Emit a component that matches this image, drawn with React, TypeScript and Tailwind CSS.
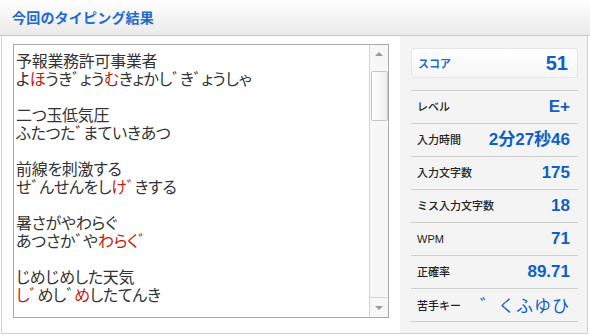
import React from "react";

type Seg = { t: string; red?: boolean };

const lines: Seg[][] = [
  [{ t: "予報業務許可事業者" }],
  [{ t: "よ" }, { t: "ほ", red: true }, { t: "うきﾞょう" }, { t: "む", red: true }, { t: "きょかしﾞきﾞょうしゃ" }],
  [],
  [{ t: "二つ玉低気圧" }],
  [{ t: "ふたつたﾞまていきあつ" }],
  [],
  [{ t: "前線を刺激する" }],
  [{ t: "せﾞんせんをし" }, { t: "けﾞ", red: true }, { t: "きする" }],
  [],
  [{ t: "暑さがやわらぐ" }],
  [{ t: "あつさかﾞや" }, { t: "わらくﾞ", red: true }],
  [],
  [{ t: "じめじめした天気" }],
  [{ t: "しﾞ", red: true }, { t: "めしﾞ" }, { t: "め", red: true }, { t: "したてんき" }],
];

const stats = [
  { label: "レベル", value: "E+" },
  { label: "入力時間", value: "2分27秒46" },
  { label: "入力文字数", value: "175" },
  { label: "ミス入力文字数", value: "18" },
  { label: "WPM", value: "71" },
  { label: "正確率", value: "89.71" },
];

export default function App() {
  return (
    <div className="w-[590px] h-[336px] bg-white overflow-hidden font-['Liberation_Sans','Noto_Sans_CJK_JP',sans-serif]">
      {/* Header */}
      <header className="h-[36px] pl-[12px] flex items-center border-b border-[#c9c9c9] bg-gradient-to-b from-white to-[#eaeaea]">
        <h1 className="text-[14px] font-bold text-[#1c6ccf] font-['Noto_Sans_CJK_JP',sans-serif] tracking-[0.2px]">
          今回のタイピング結果
        </h1>
      </header>

      <div className="ml-[1px] w-[587px] h-[298px] flex border-l border-r border-b border-[#d2d2d2]">
        {/* Typed text */}
        <div className="w-[398px] bg-white pl-[11px] pt-[8px]">
          <div className="w-[376px] h-[274px] border border-[#a9a9a9] flex bg-white">
            <div className="flex-1 pl-[2px] pt-[6px] text-[16px] leading-[18px] text-[#333] font-['Noto_Sans_CJK_JP',sans-serif] [font-feature-settings:'palt'] tracking-[-0.3px]">
              {lines.map((segs, i) => (
                <div key={i} className="h-[18px] whitespace-nowrap">
                  {segs.map((s, j) => (
                    <span key={j} className={s.red ? "text-[#c41a0a]" : ""}>
                      {s.t}
                    </span>
                  ))}
                </div>
              ))}
            </div>
            {/* Scrollbar */}
            <div className="w-[19px] border-l border-[#d4d4d4] bg-[#f7f7f7] flex flex-col items-center">
              <div className="h-[18px] w-full flex items-center justify-center">
                <div className="w-0 h-0 border-l-[4px] border-r-[4px] border-b-[4px] border-l-transparent border-r-transparent border-b-[#9a9a9a]" />
              </div>
              <div className="mt-[8px] w-[17px] h-[50px] border border-[#c6c6c6] rounded-[2px] bg-gradient-to-r from-white to-[#eeeeee]" />
              <div className="flex-1" />
              <div className="h-[20px] w-full border-t border-[#d4d4d4] flex items-center justify-center">
                <div className="w-0 h-0 border-l-[4px] border-r-[4px] border-t-[4px] border-l-transparent border-r-transparent border-t-[#9a9a9a]" />
              </div>
            </div>
          </div>
        </div>

        {/* Results */}
        <div className="flex-1 bg-[#f4f4f4] pl-[11px] pt-[12px]">
          <div className="w-[167px]">
            <div className="h-[30px] flex items-center justify-between pl-[6px] pr-[9px] bg-gradient-to-b from-white to-[#f6f6f6] border border-[#e6e6e6] rounded-[3px]">
              <span className="text-[11px] font-bold text-[#1c6ccf] font-['Noto_Sans_CJK_JP',sans-serif]">スコア</span>
              <span className="text-[20px] font-bold text-[#0f5fc6]">51</span>
            </div>
            <div className="mt-[12px] border-t border-[#cfcfcf]">
              {stats.map((s) => (
                <div key={s.label} className="h-[33px] flex items-center justify-between pl-[6px] pr-[8px] border-b border-[#cfcfcf]">
                  <span className="text-[11px] font-medium text-[#222] font-['Liberation_Sans','Noto_Sans_CJK_JP',sans-serif]">{s.label}</span>
                  <span className="text-[17px] font-bold text-[#0f5fc6]">{s.value}</span>
                </div>
              ))}
              <div className="h-[33px] flex items-center justify-between pl-[6px] pr-[8px] border-b border-[#cfcfcf]">
                <span className="text-[11px] font-medium text-[#222] font-['Noto_Sans_CJK_JP',sans-serif]">苦手キー</span>
                <span className="text-[17px] text-[#0f5fc6] font-['Noto_Sans_CJK_JP',sans-serif] tracking-[1px]">
                  ゛くふゆひ
                </span>
              </div>
            </div>
          </div>
        </div>
      </div>
    </div>
  );
}
